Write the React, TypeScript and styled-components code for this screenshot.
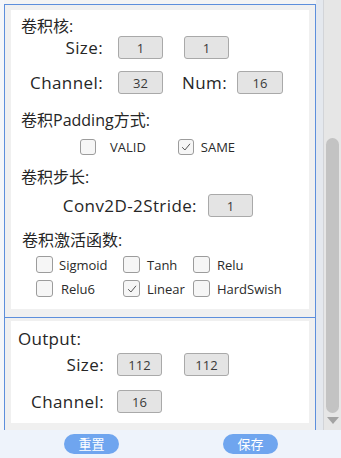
import React from "react";
import styled, { createGlobalStyle } from "styled-components";

const Global = createGlobalStyle`
  html, body { margin: 0; padding: 0; overflow: hidden; background: #eef3fb; }
  * { box-sizing: border-box; }
`;

const BLUE = "#5d8fdc";
const FONT = `"Open Sans", "Noto Sans CJK SC", sans-serif`;

const Root = styled.div`
  width: 341px;
  height: 458px;
  display: flex;
  flex-direction: column;
  font-family: ${FONT};
  color: #222;
`;

const Main = styled.div`
  height: 430px;
  display: flex;
`;

const Viewport = styled.div`
  width: 323px;
  height: 430px;
  overflow: hidden;
  background: #e4e8ee;
  border-left: 4px solid #f5f7fa;
  display: flex;
  flex-direction: column;
`;

const TopStrip = styled.div`
  flex: none;
  width: 316px;
  margin-left: -4px;
  height: 5px;
  background: #f4f4f4;
  border-bottom: 1px solid ${BLUE};
`;

const Group = styled.div<{ $top: number }>`
  flex: none;
  width: 312px;
  background: #f0f0f0;
  border-left: 1px solid ${BLUE};
  border-right: 1px solid ${BLUE};
  border-bottom: 1px solid ${BLUE};
  padding: ${(p) => p.$top}px 5px 8px 6px;
`;

const Card = styled.div<{ $pt: number; $pb: number }>`
  width: 298px;
  background: #ffffff;
  display: flex;
  flex-direction: column;
  padding: ${(p) => p.$pt}px 0 ${(p) => p.$pb}px 0;
`;

const Header = styled.div<{ $mt?: number; $pl?: number }>`
  height: 20px;
  line-height: 20px;
  font-size: 16px;
  padding-left: ${(p) => p.$pl ?? 10}px;
  margin-top: ${(p) => p.$mt ?? 0}px;
  color: #262626;
  white-space: nowrap;
`;

const LatinHeader = styled(Header)`
  font-size: 17px;
  height: 22px;
  line-height: 22px;
  letter-spacing: 0.3px;
`;

const FormRow = styled.div<{ $mt?: number }>`
  display: flex;
  align-items: center;
  height: 23px;
  margin-top: ${(p) => p.$mt ?? 0}px;
`;

const Label = styled.div<{ $w: number; $ml?: number; $align?: string }>`
  flex: none;
  width: ${(p) => p.$w}px;
  margin-left: ${(p) => p.$ml ?? 0}px;
  text-align: ${(p) => p.$align ?? "right"};
  font-size: 17px;
  letter-spacing: 0.4px;
  line-height: 23px;
  color: #262626;
  white-space: nowrap;
`;

const ValueBox = styled.div<{ $ml: number; $w?: number }>`
  flex: none;
  width: ${(p) => p.$w ?? 45}px;
  height: 23px;
  margin-left: ${(p) => p.$ml}px;
  background: #e4e4e4;
  border: 1px solid #a9a9a9;
  border-radius: 3px;
  display: flex;
  align-items: center;
  justify-content: center;
  font-size: 13px;
  color: #3a3a3a;
`;

const OptionRow = styled.div<{ $mt: number; $pl: number }>`
  display: flex;
  align-items: center;
  height: 20px;
  margin-top: ${(p) => p.$mt}px;
  padding-left: ${(p) => p.$pl}px;
`;

const Box = styled.div<{ $ml?: number; $size?: number }>`
  flex: none;
  width: ${(p) => p.$size ?? 16}px;
  height: ${(p) => p.$size ?? 16}px;
  margin-left: ${(p) => p.$ml ?? 0}px;
  border: 1px solid #9c9c9c;
  border-radius: 3px;
  background: #f6f6f6;
  display: flex;
  align-items: center;
  justify-content: center;
`;

const OptText = styled.span<{ $ml: number }>`
  margin-left: ${(p) => p.$ml}px;
  font-size: 13px;
  color: #2a2a2a;
  white-space: nowrap;
`;

const OptGrid = styled.div`
  display: grid;
  grid-template-columns: 87px 70px auto;
  row-gap: 7px;
  margin-top: 6px;
  padding-left: 25px;
`;

const OptCell = styled.div`
  display: flex;
  align-items: center;
  height: 17px;
`;

const Scrollbar = styled.div`
  width: 18px;
  height: 430px;
  background: #e6e6e6;
  border-left: 1px solid #d2d4d8;
  display: flex;
  flex-direction: column;
  align-items: center;
  padding-top: 138px;
`;

const Thumb = styled.div`
  width: 13px;
  height: 275px;
  border-radius: 7px;
  background: #c3c3c3;
`;

const Arrow = styled.div`
  margin-top: 4px;
  width: 0;
  height: 0;
  border-left: 6px solid transparent;
  border-right: 6px solid transparent;
  border-top: 7px solid #a3a3a3;
`;

const BottomBar = styled.div`
  height: 28px;
  background: #eef3fb;
  display: flex;
  align-items: flex-start;
  padding: 4px 0 0 64px;
  gap: 104px;
`;

const PillButton = styled.button`
  width: 55px;
  height: 20px;
  border: none;
  border-radius: 10px;
  background: #6fa5ef;
  color: #ffffff;
  font-family: "Noto Sans CJK SC", sans-serif;
  font-size: 13px;
  line-height: 20px;
  padding: 0;
`;

const Check = () => (
  <svg width="12" height="12" viewBox="0 0 12 12">
    <path d="M2.2 6.2 L4.9 9 L10 2.8" fill="none" stroke="#555" strokeWidth="1" />
  </svg>
);

const Opt = ({ label, checked, ml = 6 }: { label: string; checked?: boolean; ml?: number }) => (
  <OptCell>
    <Box $size={17}>{checked && <Check />}</Box>
    <OptText $ml={ml}>{label}</OptText>
  </OptCell>
);

export default function App() {
  return (
    <Root>
      <Global />
      <Main>
        <Viewport>
          <TopStrip />
          <Group $top={5}>
            <Card $pt={6} $pb={12}>
              <Header>卷积核:</Header>
              <FormRow>
                <Label $w={92}>Size:</Label>
                <ValueBox $ml={15}>1</ValueBox>
                <ValueBox $ml={21}>1</ValueBox>
              </FormRow>
              <FormRow $mt={12}>
                <Label $w={92}>Channel:</Label>
                <ValueBox $ml={15}>32</ValueBox>
                <Label $w={44} $ml={19} $align="left">Num:</Label>
                <ValueBox $ml={11} $w={46}>16</ValueBox>
              </FormRow>
              <Header $mt={16}>卷积Padding方式:</Header>
              <OptionRow $mt={7} $pl={69}>
                <Box />
                <OptText $ml={14}>VALID</OptText>
                <Box $ml={32}>
                  <Check />
                </Box>
                <OptText $ml={7}>SAME</OptText>
              </OptionRow>
              <Header $mt={10}>卷积步长:</Header>
              <FormRow $mt={7}>
                <Label $w={186}>Conv2D-2Stride:</Label>
                <ValueBox $ml={11}>1</ValueBox>
              </FormRow>
              <Header $mt={13} $pl={11}>卷积激活函数:</Header>
              <OptGrid>
                <Opt label="Sigmoid" />
                <Opt label="Tanh" ml={7} />
                <Opt label="Relu" ml={7} />
                <Opt label="Relu6" ml={8} />
                <Opt label="Linear" checked ml={7} />
                <Opt label="HardSwish" ml={7} />
              </OptGrid>
            </Card>
          </Group>
          <Group $top={3}>
            <Card $pt={7} $pb={10}>
              <LatinHeader $pl={7}>Output:</LatinHeader>
              <FormRow $mt={3}>
                <Label $w={93}>Size:</Label>
                <ValueBox $ml={13}>112</ValueBox>
                <ValueBox $ml={22}>112</ValueBox>
              </FormRow>
              <FormRow $mt={14}>
                <Label $w={93}>Channel:</Label>
                <ValueBox $ml={13}>16</ValueBox>
              </FormRow>
            </Card>
          </Group>
        </Viewport>
        <Scrollbar>
          <Thumb />
          <Arrow />
        </Scrollbar>
      </Main>
      <BottomBar>
        <PillButton>重置</PillButton>
        <PillButton>保存</PillButton>
      </BottomBar>
    </Root>
  );
}
